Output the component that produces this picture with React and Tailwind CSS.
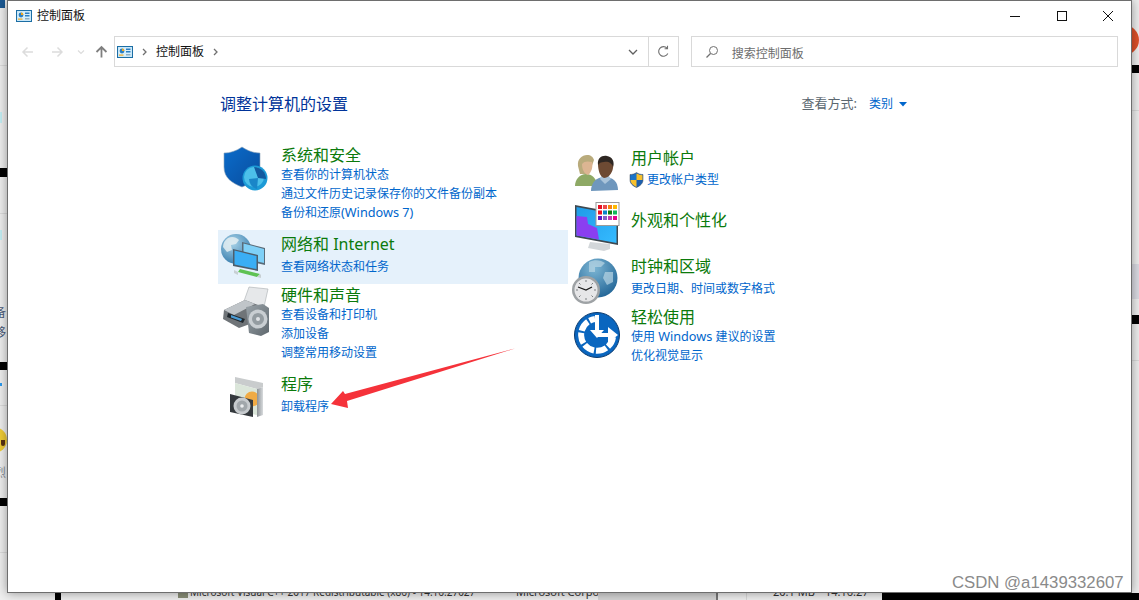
import { useId } from 'react'

const FONT = "font-['Noto_Sans','Noto_Sans_CJK_SC',sans-serif]"

function CpIcon({ size = 16 }) {
  return (
    <svg width={size} height={size * 0.75} viewBox="0 0 16 12" className="shrink-0">
      <rect x="0.5" y="0.5" width="15" height="11" fill="#bfe3f7" stroke="#1c6ea4" />
      <rect x="1.5" y="1.5" width="13" height="9" fill="#d5eefb" />
      <circle cx="5" cy="5" r="2.4" fill="#2b7fc3" />
      <path d="M5 5V2.6A2.4 2.4 0 0 1 7.4 5Z" fill="#f2a81d" />
      <rect x="9" y="2.5" width="4.5" height="1.5" fill="#2b7fc3" />
      <rect x="9" y="5" width="4.5" height="1.5" fill="#2b7fc3" />
      <rect x="2" y="8.5" width="4.5" height="1.2" fill="#f2a81d" />
      <rect x="9" y="8.2" width="4.5" height="1.2" fill="#7d9fb5" />
    </svg>
  )
}

function ShieldIcon() {
  const id = useId()
  return (
    <svg width="48" height="48" viewBox="0 0 48 48" className="ml-[4px] mt-[1px]">
      <defs>
        <linearGradient id={id} x1="0" y1="0" x2="1" y2="1">
          <stop offset="0" stopColor="#0a6ccb" />
          <stop offset="1" stopColor="#0a4c9c" />
        </linearGradient>
      </defs>
      <path d="M20 1C26 5 32 7 38 7V24C38 32 30 37 20 41C10 37 2 32 2 21V7C8 7 14 5 20 1Z" fill={`url(#${id})`} stroke="#8fa4b8" strokeWidth="0.6" />
      <circle cx="33" cy="32" r="12.500" fill="#1c9ad6" />
      <circle cx="32" cy="31" r="10" fill="#4cc0ea" />
      <path d="M32 21L36 32L44 33A12 12 0 0 0 32 21Z" fill="#12599f" />
      <path d="M27 33L36 32L35 43A11 11 0 0 1 27 33Z" fill="#1a86c8" />
    </svg>
  )
}

function NetworkIcon() {
  const id = useId()
  return (
    <svg width="50" height="48" viewBox="0 0 50 48" className="ml-[2px] -mt-[2px]">
      <defs>
        <radialGradient id={id} cx="0.4" cy="0.3" r="0.8">
          <stop offset="0" stopColor="#a9d3e8" />
          <stop offset="1" stopColor="#2c75a8" />
        </radialGradient>
      </defs>
      <circle cx="16" cy="17" r="15" fill={`url(#${id})`} />
      <path d="M8 6C12 4 16 5 19 8L16 12L11 13L12 18L7 20L3 15C3 11 5 8 8 6ZM24 12L29 15L28 21L23 19ZM16 23L21 25L19 31L15 30Z" fill="#e4eef2" opacity="0.85" />
      <path d="M22 10L45 16V33L22 28Z" fill="#5a6b78" />
      <path d="M23.5 11.5L44 17V31L23.5 26.5Z" fill="#7fd0f7" />
      <path d="M13 17L38 23V39L13 34Z" fill="#4e5e6b" />
      <path d="M14.5 18.5L36.5 24V37L14.5 32.5Z" fill="#3aaef4" />
      <path d="M18 40L37 45L40 42L20 37Z" fill="#5fc253" />
      <path d="M37 45L41 46L41 43L40 42Z" fill="#c8d0d4" />
      <path d="M14 38L18 40L18 43L14 41Z" fill="#c8d0d4" />
    </svg>
  )
}

function PrinterIcon() {
  const id = useId()
  return (
    <svg width="50" height="52" viewBox="0 0 50 52" className="ml-[3px] mt-[1px]">
      <defs>
        <linearGradient id={id} x1="0" y1="0" x2="1" y2="1">
          <stop offset="0" stopColor="#9aa3a9" />
          <stop offset="1" stopColor="#5f686e" />
        </linearGradient>
      </defs>
      <path d="M28 1L47 3L43 21L22 18Z" fill="#e6e8ea" stroke="#a7acb0" strokeWidth="0.6" />
      <path d="M3 24L24 14L40 20L40 34L18 42L2 33Z" fill="#6f7478" />
      <path d="M3 24L24 14L34 18L13 29Z" fill="#c0c5c9" />
      <path d="M7 27L24 33L22 37L6 31Z" fill="#20282e" />
      <path d="M10 29L21 33L20 35L10 31.500Z" fill="#4a9bd4" />
      <path d="M25 21L42 18L48 22V46L40 50L28 47Z" fill={`url(#${id})`} />
      <circle cx="37" cy="33" r="9.500" fill="#c9ced2" />
      <circle cx="37" cy="33" r="6" fill="#949ca1" />
      <circle cx="37" cy="33" r="2" fill="#dfe2e5" />
    </svg>
  )
}

function BoxIcon() {
  const id = useId()
  return (
    <svg width="40" height="44" viewBox="0 0 40 44" className="ml-[10px] mt-[1px]">
      <defs>
        <linearGradient id={id} x1="0" y1="0" x2="1" y2="0">
          <stop offset="0" stopColor="#8d9296" />
          <stop offset="1" stopColor="#d8dbdd" />
        </linearGradient>
      </defs>
      <path d="M7 2L35 8L35 12L29 14L7 8Z" fill="#c9cccd" />
      <path d="M7 8L29 14V40L7 36Z" fill="#dbe6da" />
      <circle cx="24" cy="24" r="7.500" fill="#f0ab45" />
      <path d="M29 14L35 12V40L29 42Z" fill={`url(#${id})`} />
      <path d="M2 19L25 25V42L2 37Z" fill="#34393d" />
      <circle cx="14" cy="31" r="8.500" fill="#c7cbce" />
      <circle cx="14" cy="31" r="5.500" fill="#a1a7ab" />
      <circle cx="14" cy="31" r="1.800" fill="#eceeef" />
    </svg>
  )
}

function UsersIcon() {
  return (
    <svg width="46" height="38" viewBox="0 0 46 38" className="ml-[6px] mt-[6px]">
      <path d="M1 32C1 25 6 20 12 20C18 20 22 24 24 32Z" fill="#8ea965" />
      <path d="M4 12C3 5 8 1 13 1C17 1 19 3 20 6L15 20L6 20Z" fill="#b9ab7c" />
      <path d="M8 10C10 7 14 7 18 8C19 12 18 18 14 21C10 20 8 15 8 10Z" fill="#dcb592" />
      <path d="M17 37C17 29 22 23 31 23C39 23 44 28 44 36Z" fill="#6f97bd" />
      <path d="M26 25L31 30L37 25L34 21H28Z" fill="#a9c3da" />
      <path d="M24 10C25 4 29 2 33 3C38 4 40 8 39 14C38 20 34 24 30 24C26 23 24 16 24 10Z" fill="#6d4a33" />
      <path d="M24 11C23 4 28 1 33 2C38 3 41 7 39 13C38 9 34 7 30 8C27 8 25 9 24 11Z" fill="#2e2723" />
    </svg>
  )
}

function MonitorIcon() {
  const id = useId()
  return (
    <svg width="48" height="50" viewBox="0 0 48 50" className="ml-[6px] -mt-[8px]">
      <defs>
        <linearGradient id={id} x1="0" y1="0" x2="1" y2="1">
          <stop offset="0" stopColor="#1f9be8" />
          <stop offset="1" stopColor="#35bbff" />
        </linearGradient>
      </defs>
      <path d="M16 40L36 42V47L30 49L14 46Z" fill="#d3d7da" />
      <path d="M1 3L44 11V43L1 35Z" fill="#3e4850" />
      <path d="M2.500 5L42.500 12.500V41L2.500 33.500Z" fill={`url(#${id})`} />
      <path d="M2.500 14L13 15L14 22L23 26L25 37.500L2.500 33.500Z" fill="#8a3ff0" />
      <rect x="22" y="0.5" width="23" height="23" fill="#fff" stroke="#9a9a9a" />
      <g>
        <rect x="24" y="3" width="4" height="4" fill="#e81123" />
        <rect x="29" y="3" width="4" height="4" fill="#ec4b4b" />
        <rect x="34" y="3" width="4" height="4" fill="#f7830f" />
        <rect x="39" y="3" width="4" height="4" fill="#ffb900" />
        <rect x="24" y="8.500" width="4" height="4" fill="#e81123" />
        <rect x="29" y="8.500" width="4" height="4" fill="#0a84c8" />
        <rect x="34" y="8.500" width="4" height="4" fill="#107c10" />
        <rect x="39" y="8.500" width="4" height="4" fill="#10b85a" />
        <rect x="24" y="14" width="4" height="4" fill="#5c16c5" />
        <rect x="29" y="14" width="4" height="4" fill="#8661c5" />
        <rect x="34" y="14" width="4" height="4" fill="#c239b3" />
        <rect x="39" y="14" width="4" height="4" fill="#e3008c" />
      </g>
    </svg>
  )
}

function ClockIcon() {
  const id = useId()
  return (
    <svg width="48" height="48" viewBox="0 0 48 48" className="ml-[3px] mt-[2px]">
      <defs>
        <radialGradient id={id} cx="0.4" cy="0.25" r="0.85">
          <stop offset="0" stopColor="#7db6d4" />
          <stop offset="1" stopColor="#1b5f92" />
        </radialGradient>
      </defs>
      <circle cx="27" cy="20" r="19.500" fill={`url(#${id})`} />
      <path d="M18 4C24 1 30 2 34 5L30 9L24 9L24 14L18 14ZM34 14L42 14L42 24L36 27L32 20ZM22 24L28 26L26 34L22 32Z" fill="#b9d5e4" opacity="0.7" />
      <circle cx="15" cy="32" r="14" fill="#9ea2a5" />
      <circle cx="15" cy="32" r="11.500" fill="#e6e6e8" />
      <path d="M15 22V24M15 40V42M5 32H7M23 32H25M8 25L9.500 26.500M22 25L20.500 26.500M8 39L9.500 37.500M22 39L20.500 37.500" stroke="#7a7e81" strokeWidth="1" />
      <path d="M7 29L15 32L21 29" stroke="#1a1a1a" strokeWidth="1.300" fill="none" />
    </svg>
  )
}

function EaseIcon() {
  return (
    <svg width="46" height="46" viewBox="0 0 46 46" className="ml-[6px] mt-[5px]">
      <circle cx="23" cy="23" r="22.500" fill="#0a66bf" stroke="#0b3a6e" />
      {/* ring runs from the right, round the bottom and left, up to the top */}
      <path d="M39 25A16 16 0 1 1 21 7" fill="none" stroke="#fff" strokeWidth="6" strokeDasharray="11 2" />
      <path d="M21 3H25V18H30L23 26L16 18H21Z" fill="#fff" />
      <path d="M23 21H34V15L44 23L34 31V25H23Z" fill="#fff" />
    </svg>
  )
}

function Category({ icon, title, links, className, linksClass }) {
  return (
    <div className={`flex ${className}`}>
      <div className="w-[63px] shrink-0">{icon}</div>
      <div className="min-w-0">
        <div className="text-[16px] leading-5 text-[#0b7a0b] whitespace-nowrap">{title}</div>
        <div className={linksClass}>
          {links.map((l, i) => (
            <div key={i} className="flex items-center text-[12px] leading-[19px] text-[#0066cc] whitespace-nowrap">
              {l}
            </div>
          ))}
        </div>
      </div>
    </div>
  )
}

function UacShield() {
  return (
    <svg width="15" height="16" viewBox="0 0 15 16" className="-ml-[2px] mr-[3px] shrink-0">
      <path d="M7.500 0.500C9.500 2 11.500 2.500 14 2.500V8C14 11.500 11 14 7.500 15.500C4 14 1 11.500 1 8V2.500C3.500 2.500 5.500 2 7.500 0.500Z" fill="#1c5fae" stroke="#3c4a58" strokeWidth="0.5" />
      <path d="M7.500 1.500V8H1.500V3.200C3.500 3 5.500 2.500 7.500 1.500Z" fill="#1a74c9" />
      <path d="M7.500 1.500C9.500 2.500 11.500 3 13.500 3.200V8H7.500Z" fill="#f7c02c" />
      <path d="M1.500 8H7.500V15C4.500 13.500 1.500 11.500 1.500 8Z" fill="#f7c02c" />
    </svg>
  )
}

// sliver of the desktop left of the window
function LeftStrip() {
  return (
    <div className="flex flex-col w-[7px] h-[593px] shrink-0 overflow-hidden">
      <div className="w-[5px] h-[8px] shrink-0 bg-[#1c5a94]" />
      <div className="mt-[57px] h-px shrink-0 bg-[#dcdcdc]" />
      <div className="mt-[46px] w-[2px] h-[11px] shrink-0 bg-[#c4f0f5]" />
      <div className="mt-[45px] h-[9px] shrink-0 bg-black" />
      <div className="mt-[36px] h-px shrink-0 bg-[#dcdcdc]" />
      <div className="mt-[16px] w-[2px] h-[10px] shrink-0 bg-[#c4f0f5]" />
      <div className="mt-[65px] -ml-[6px] h-[16px] shrink-0 text-[12px] leading-4 text-[#4a5a78]">备</div>
      <div className="mt-[4px] -ml-[6px] h-[16px] shrink-0 text-[12px] leading-4 text-[#4a5a78]">移</div>
      <div className="mt-[21px] h-[8px] shrink-0 bg-black" />
      <div className="mt-[13px] w-[2px] h-[3px] shrink-0 bg-[#2b9bf0]" />
      <div className="mt-[19px] h-px shrink-0 bg-[#dcdcdc]" />
      <div className="relative mt-[21px] -ml-[19px] w-[26px] h-[26px] shrink-0 rounded-full bg-[#f0cc35]">
        <div className="absolute right-[2px] top-[13px] w-[4px] h-[6px] rounded-b-full bg-[#5a3414]" />
      </div>
      <div className="mt-[12px] -ml-[6px] h-[16px] shrink-0 text-[12px] leading-4 text-[#8a8f98]">烈</div>
      <div className="mt-[17px] h-[8px] shrink-0 bg-black" />
      <div className="mt-[46px] h-px shrink-0 bg-[#dcdcdc]" />
    </div>
  )
}

function RightStrip() {
  return (
    <div className="flex flex-col w-[7px] h-[593px] shrink-0 overflow-hidden">
      <div className="mt-[25px] -ml-[23px] w-[30px] h-[30px] shrink-0 rounded-full bg-[#e0512a]" />
      <div className="mt-[10px] h-[8px] shrink-0 bg-black" />
      <div className="mt-[37px] h-px shrink-0 bg-[#dcdcdc]" />
      <div className="mt-[153px] h-[35px] shrink-0 bg-[#dcdce4]" />
      <div className="mt-[16px] h-[9px] shrink-0 bg-black" />
      <div className="mt-[36px] h-px shrink-0 bg-[#dcdcdc]" />
    </div>
  )
}

// table row of the program list that sticks out under the window
function BottomStrip() {
  const cell = 'shrink-0 -mt-[9px] h-4 leading-4 text-[#333] whitespace-nowrap overflow-hidden'
  return (
    <div className="flex h-[7px] overflow-hidden">
      <div className="w-[55px] shrink-0" />
      <div className="w-[6px] shrink-0 bg-black" />
      <div className="w-[117px] shrink-0" />
      <div className="w-[10px] h-[5px] mr-[2px] shrink-0 bg-[#8a8f78]" />
      <div className={`w-[326px] text-[10px] ${cell}`}>Microsoft Visual C++ 2017 Redistributable (x86) - 14.16.27027</div>
      <div className={`w-[82px] text-[11px] ${cell}`}>Microsoft Corpora</div>
      <div className="w-[120px] shrink-0 bg-[#d4d4d4] border-r-2 border-[#777]" />
      <div className="w-[29px] shrink-0 border-r border-[#d8d8d8]" />
      <div className="w-[26px] shrink-0" />
      <div className={`w-[52px] text-[11px] ${cell}`}>20.1 MB</div>
      <div className={`w-[57px] text-[11px] ${cell}`}>14.16.27</div>
      <div className="flex-1 bg-black" />
    </div>
  )
}

export default function App() {
  return (
    <div className={`relative w-[1139px] h-[600px] overflow-hidden bg-[#efefef] ${FONT}`}>
      <div className="flex">
        <LeftStrip />

        {/* control panel window */}
        <div className="relative z-10 w-[1125px] h-[593px] shrink-0 bg-white border border-[#6e6e6e] shadow-[0_0_10px_rgba(0,0,0,0.4)]">
          <div className="flex items-center h-[29px] pl-[8px]">
            <CpIcon />
            <span className="ml-[5px] text-[12px] text-[#111]">控制面板</span>
            <div className="ml-auto flex items-center">
              <svg width="12" height="12" viewBox="0 0 12 12" className="mr-[35px]"><path d="M1 6.500H11" stroke="#111" /></svg>
              <svg width="12" height="12" viewBox="0 0 12 12" className="mr-[34px]"><rect x="1.500" y="1.500" width="9" height="9" fill="none" stroke="#111" /></svg>
              <svg width="12" height="12" viewBox="0 0 12 12" className="mr-[17px]"><path d="M1 1L11 11M11 1L1 11" stroke="#111" /></svg>
            </div>
          </div>

          <div className="flex items-center mt-[6px] h-[31px] pl-[13px] pr-[13px]">
            <svg width="13" height="12" viewBox="0 0 13 12" className="mr-[17px]"><path d="M12 6H2M6.500 1.500L2 6L6.500 10.500" fill="none" stroke="#dcdcdc" strokeWidth="1.500" /></svg>
            <svg width="13" height="12" viewBox="0 0 13 12" className="mr-[13px]"><path d="M1 6H11M6.500 1.500L11 6L6.500 10.500" fill="none" stroke="#dcdcdc" strokeWidth="1.500" /></svg>
            <svg width="8" height="6" viewBox="0 0 8 6" className="mr-[10px]"><path d="M1 1.500L4 4.500L7 1.500" fill="none" stroke="#dcdcdc" strokeWidth="1.200" /></svg>
            <svg width="13" height="13" viewBox="0 0 13 13" className="mr-[6px]"><path d="M6.500 12.500V2M1.500 7L6.500 2L11.500 7" fill="none" stroke="#7f7f7f" strokeWidth="1.800" /></svg>

            <div className="flex items-center w-[566px] h-full border border-[#d9d9d9]">
              <span className="ml-[2px]"><CpIcon /></span>
              <svg width="6" height="8" viewBox="0 0 6 8" className="ml-[9px]"><path d="M1 1L4 4L1 7" fill="none" stroke="#707070" strokeWidth="1.300" /></svg>
              <span className="ml-[8px] text-[12px] text-[#111]">控制面板</span>
              <svg width="6" height="8" viewBox="0 0 6 8" className="ml-[9px]"><path d="M1 1L4 4L1 7" fill="none" stroke="#707070" strokeWidth="1.300" /></svg>
              <svg width="10" height="6" viewBox="0 0 10 6" className="ml-auto mr-[10px]"><path d="M1 1L5 5L9 1" fill="none" stroke="#606060" strokeWidth="1.300" /></svg>
              <div className="flex items-center justify-center w-[30px] h-full border-l border-[#d9d9d9]">
                <svg width="13" height="13" viewBox="0 0 13 13"><path d="M10.800 8.500A4.800 4.800 0 1 1 10 3.200M10.500 0.800V3.700H7.600" fill="none" stroke="#707070" strokeWidth="1.100" /></svg>
              </div>
            </div>

            <div className="flex items-center ml-[12px] w-[428px] h-full border border-[#d9d9d9]">
              <svg width="14" height="14" viewBox="0 0 14 14" className="ml-[13px]"><circle cx="8.500" cy="5.500" r="4" fill="none" stroke="#707070" /><path d="M5.500 8.500L1.500 12.500" stroke="#707070" strokeWidth="1.200" /></svg>
              <span className="ml-[13px] mt-[4px] text-[12px] text-[#6d6d6d]">搜索控制面板</span>
            </div>
          </div>

          <div className="pl-[210px] w-[910px]">
            <div className="flex items-center justify-between h-[24px] mt-[25px] pl-[2px] pr-[11px]">
              <span className="text-[16px] text-[#003399]">调整计算机的设置</span>
              <div className="flex items-center text-[12px]">
                <span className="text-[13px] text-[#5b6770]">查看方式:</span>
                <span className="ml-[12px] text-[#0066cc]">类别</span>
                <svg width="8" height="5" viewBox="0 0 8 5" className="ml-[6px]"><path d="M0 0H8L4 4.500Z" fill="#0066cc" /></svg>
              </div>
            </div>

            <div className="flex">
              <div className="w-[350px] pt-[29px]">
                <Category
                  className="h-[85px]"
                  icon={<ShieldIcon />}
                  title="系统和安全"
                  links={[
                    '查看你的计算机状态',
                    '通过文件历史记录保存你的文件备份副本',
                    <span>备份和还原<span className="text-[12.700px]">(Windows 7)</span></span>,
                  ]}
                />
                <Category
                  className="h-[54px] pt-[4px] bg-[#e5f1fb]"
                  linksClass="mt-[3px]"
                  icon={<NetworkIcon />}
                  title="网络和 Internet"
                  links={['查看网络状态和任务']}
                />
                <Category
                  className="h-[90px] pt-[1px]"
                  icon={<PrinterIcon />}
                  title="硬件和声音"
                  links={['查看设备和打印机', '添加设备', '调整常用移动设置']}
                />
                <Category
                  className="h-[50px]"
                  linksClass="mt-[3px]"
                  icon={<BoxIcon />}
                  title="程序"
                  links={['卸载程序']}
                />
              </div>
              <div className="w-[350px] pt-[32px]">
                <Category
                  className="h-[62px]"
                  linksClass="mt-[2px]"
                  icon={<UsersIcon />}
                  title="用户帐户"
                  links={[<><UacShield /><span>更改帐户类型</span></>]}
                />
                <Category className="h-[46px]" icon={<MonitorIcon />} title="外观和个性化" links={[]} />
                <Category
                  className="h-[51px]"
                  linksClass="mt-[3px]"
                  icon={<ClockIcon />}
                  title="时钟和区域"
                  links={['更改日期、时间或数字格式']}
                />
                <Category
                  className="h-[60px]"
                  icon={<EaseIcon />}
                  title="轻松使用"
                  links={[
                    <span>使用 <span className="text-[12.700px]">Windows</span> 建议的设置</span>,
                    '优化视觉显示',
                  ]}
                />
              </div>
            </div>
          </div>
        </div>

        <RightStrip />
      </div>

      <BottomStrip />

      {/* red annotation arrow */}
      <svg width="200" height="70" viewBox="0 0 200 70" className="absolute z-20 left-[325px] top-[345px]">
        <path d="M190 3.500L20 49L18 46L6 59L23 63L22 56Z" fill="#f5323a" />
      </svg>

      <span className="absolute z-20 left-[952px] top-[574px] text-[16.750px] leading-[18px] text-[#8a8a8a] font-['Liberation_Sans',sans-serif]">CSDN @a1439332607</span>
    </div>
  )
}
